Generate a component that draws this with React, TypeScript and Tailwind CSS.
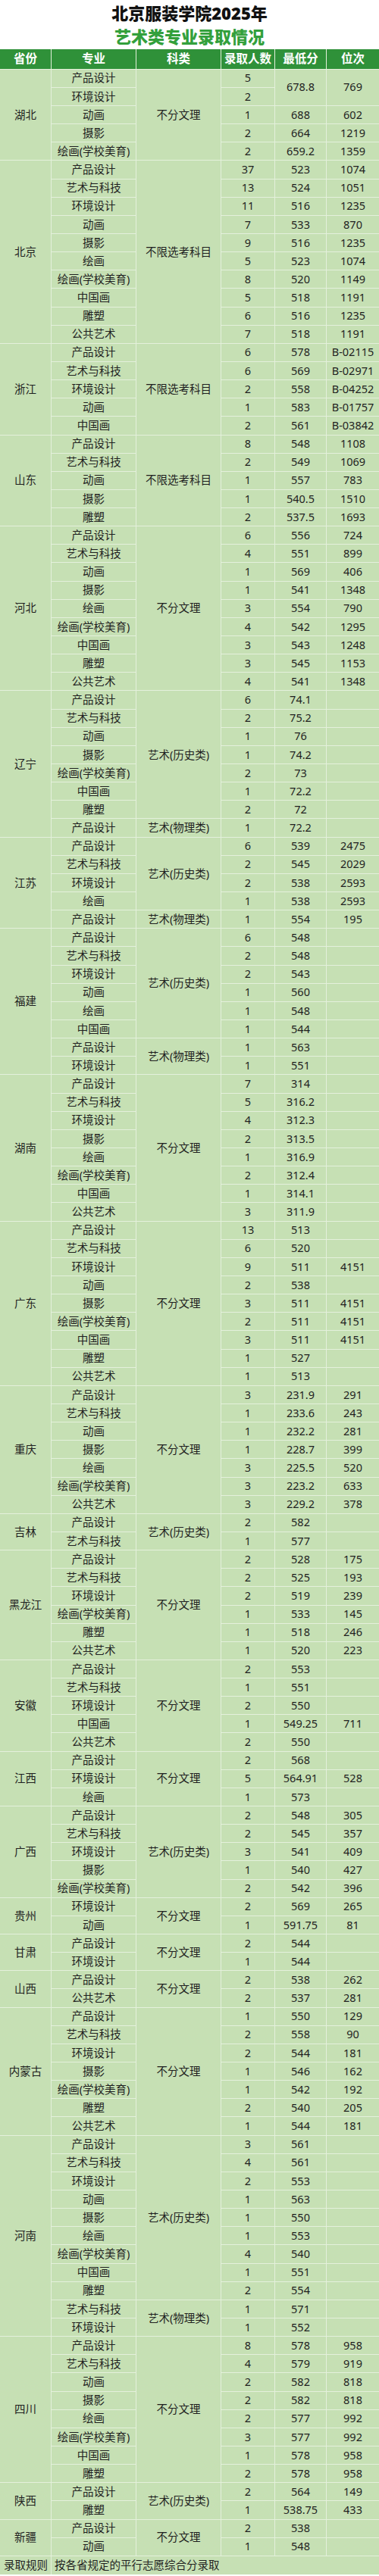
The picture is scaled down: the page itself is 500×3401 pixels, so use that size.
import React from "react";

// [专业, 录取人数, 最低分, 位次, 合并行数]; null = covered by the cell above
type Row = [string, string, string | null, string | null, number?];
type Group = { k: string; rows: Row[] };
type Province = { p: string; groups: Group[] };

const DATA: Province[] = [
  {
    p: "湖北",
    groups: [
      {
        k: "不分文理",
        rows: [
          ["产品设计", "5", "678.8", "769", 2],
          ["环境设计", "2", null, null],
          ["动画", "1", "688", "602"],
          ["摄影", "2", "664", "1219"],
          ["绘画(学校美育)", "2", "659.2", "1359"],
        ],
      },
    ],
  },
  {
    p: "北京",
    groups: [
      {
        k: "不限选考科目",
        rows: [
          ["产品设计", "37", "523", "1074"],
          ["艺术与科技", "13", "524", "1051"],
          ["环境设计", "11", "516", "1235"],
          ["动画", "7", "533", "870"],
          ["摄影", "9", "516", "1235"],
          ["绘画", "5", "523", "1074"],
          ["绘画(学校美育)", "8", "520", "1149"],
          ["中国画", "5", "518", "1191"],
          ["雕塑", "6", "516", "1235"],
          ["公共艺术", "7", "518", "1191"],
        ],
      },
    ],
  },
  {
    p: "浙江",
    groups: [
      {
        k: "不限选考科目",
        rows: [
          ["产品设计", "6", "578", "B-02115"],
          ["艺术与科技", "6", "569", "B-02971"],
          ["环境设计", "2", "558", "B-04252"],
          ["动画", "1", "583", "B-01757"],
          ["中国画", "2", "561", "B-03842"],
        ],
      },
    ],
  },
  {
    p: "山东",
    groups: [
      {
        k: "不限选考科目",
        rows: [
          ["产品设计", "8", "548", "1108"],
          ["艺术与科技", "2", "549", "1069"],
          ["动画", "1", "557", "783"],
          ["摄影", "1", "540.5", "1510"],
          ["雕塑", "2", "537.5", "1693"],
        ],
      },
    ],
  },
  {
    p: "河北",
    groups: [
      {
        k: "不分文理",
        rows: [
          ["产品设计", "6", "556", "724"],
          ["艺术与科技", "4", "551", "899"],
          ["动画", "1", "569", "406"],
          ["摄影", "1", "541", "1348"],
          ["绘画", "3", "554", "790"],
          ["绘画(学校美育)", "4", "542", "1295"],
          ["中国画", "3", "543", "1248"],
          ["雕塑", "3", "545", "1153"],
          ["公共艺术", "4", "541", "1348"],
        ],
      },
    ],
  },
  {
    p: "辽宁",
    groups: [
      {
        k: "艺术(历史类)",
        rows: [
          ["产品设计", "6", "74.1", ""],
          ["艺术与科技", "2", "75.2", ""],
          ["动画", "1", "76", ""],
          ["摄影", "1", "74.2", ""],
          ["绘画(学校美育)", "2", "73", ""],
          ["中国画", "1", "72.2", ""],
          ["雕塑", "2", "72", ""],
        ],
      },
      { k: "艺术(物理类)", rows: [["产品设计", "1", "72.2", ""]] },
    ],
  },
  {
    p: "江苏",
    groups: [
      {
        k: "艺术(历史类)",
        rows: [
          ["产品设计", "6", "539", "2475"],
          ["艺术与科技", "2", "545", "2029"],
          ["环境设计", "2", "538", "2593"],
          ["绘画", "1", "538", "2593"],
        ],
      },
      { k: "艺术(物理类)", rows: [["产品设计", "1", "554", "195"]] },
    ],
  },
  {
    p: "福建",
    groups: [
      {
        k: "艺术(历史类)",
        rows: [
          ["产品设计", "6", "548", ""],
          ["艺术与科技", "2", "548", ""],
          ["环境设计", "2", "543", ""],
          ["动画", "1", "560", ""],
          ["绘画", "1", "548", ""],
          ["中国画", "1", "544", ""],
        ],
      },
      {
        k: "艺术(物理类)",
        rows: [
          ["产品设计", "1", "563", ""],
          ["环境设计", "1", "551", ""],
        ],
      },
    ],
  },
  {
    p: "湖南",
    groups: [
      {
        k: "不分文理",
        rows: [
          ["产品设计", "7", "314", ""],
          ["艺术与科技", "5", "316.2", ""],
          ["环境设计", "4", "312.3", ""],
          ["摄影", "2", "313.5", ""],
          ["绘画", "1", "316.9", ""],
          ["绘画(学校美育)", "2", "312.4", ""],
          ["中国画", "1", "314.1", ""],
          ["公共艺术", "3", "311.9", ""],
        ],
      },
    ],
  },
  {
    p: "广东",
    groups: [
      {
        k: "不分文理",
        rows: [
          ["产品设计", "13", "513", ""],
          ["艺术与科技", "6", "520", ""],
          ["环境设计", "9", "511", "4151"],
          ["动画", "2", "538", ""],
          ["摄影", "3", "511", "4151"],
          ["绘画(学校美育)", "2", "511", "4151"],
          ["中国画", "3", "511", "4151"],
          ["雕塑", "1", "527", ""],
          ["公共艺术", "1", "513", ""],
        ],
      },
    ],
  },
  {
    p: "重庆",
    groups: [
      {
        k: "不分文理",
        rows: [
          ["产品设计", "3", "231.9", "291"],
          ["艺术与科技", "1", "233.6", "243"],
          ["动画", "1", "232.2", "281"],
          ["摄影", "1", "228.7", "399"],
          ["绘画", "3", "225.5", "520"],
          ["绘画(学校美育)", "3", "223.2", "633"],
          ["公共艺术", "3", "229.2", "378"],
        ],
      },
    ],
  },
  {
    p: "吉林",
    groups: [
      {
        k: "艺术(历史类)",
        rows: [
          ["产品设计", "2", "582", ""],
          ["艺术与科技", "1", "577", ""],
        ],
      },
    ],
  },
  {
    p: "黑龙江",
    groups: [
      {
        k: "不分文理",
        rows: [
          ["产品设计", "2", "528", "175"],
          ["艺术与科技", "2", "525", "193"],
          ["环境设计", "2", "519", "239"],
          ["绘画(学校美育)", "1", "533", "145"],
          ["雕塑", "1", "518", "246"],
          ["公共艺术", "1", "520", "223"],
        ],
      },
    ],
  },
  {
    p: "安徽",
    groups: [
      {
        k: "不分文理",
        rows: [
          ["产品设计", "2", "553", ""],
          ["艺术与科技", "1", "551", ""],
          ["环境设计", "2", "550", ""],
          ["中国画", "1", "549.25", "711"],
          ["公共艺术", "2", "550", ""],
        ],
      },
    ],
  },
  {
    p: "江西",
    groups: [
      {
        k: "不分文理",
        rows: [
          ["产品设计", "2", "568", ""],
          ["环境设计", "5", "564.91", "528"],
          ["绘画", "1", "573", ""],
        ],
      },
    ],
  },
  {
    p: "广西",
    groups: [
      {
        k: "艺术(历史类)",
        rows: [
          ["产品设计", "2", "548", "305"],
          ["艺术与科技", "2", "545", "357"],
          ["环境设计", "3", "541", "409"],
          ["摄影", "1", "540", "427"],
          ["绘画(学校美育)", "2", "542", "396"],
        ],
      },
    ],
  },
  {
    p: "贵州",
    groups: [
      {
        k: "不分文理",
        rows: [
          ["环境设计", "2", "569", "265"],
          ["动画", "1", "591.75", "81"],
        ],
      },
    ],
  },
  {
    p: "甘肃",
    groups: [
      {
        k: "不分文理",
        rows: [
          ["产品设计", "2", "544", ""],
          ["环境设计", "1", "544", ""],
        ],
      },
    ],
  },
  {
    p: "山西",
    groups: [
      {
        k: "不分文理",
        rows: [
          ["产品设计", "2", "538", "262"],
          ["公共艺术", "2", "537", "281"],
        ],
      },
    ],
  },
  {
    p: "内蒙古",
    groups: [
      {
        k: "不分文理",
        rows: [
          ["产品设计", "1", "550", "129"],
          ["艺术与科技", "2", "558", "90"],
          ["环境设计", "2", "544", "181"],
          ["摄影", "1", "546", "162"],
          ["绘画(学校美育)", "1", "542", "192"],
          ["雕塑", "2", "540", "205"],
          ["公共艺术", "1", "544", "181"],
        ],
      },
    ],
  },
  {
    p: "河南",
    groups: [
      {
        k: "艺术(历史类)",
        rows: [
          ["产品设计", "3", "561", ""],
          ["艺术与科技", "4", "561", ""],
          ["环境设计", "2", "553", ""],
          ["动画", "1", "563", ""],
          ["摄影", "1", "550", ""],
          ["绘画", "1", "553", ""],
          ["绘画(学校美育)", "4", "540", ""],
          ["中国画", "1", "551", ""],
          ["雕塑", "2", "554", ""],
        ],
      },
      {
        k: "艺术(物理类)",
        rows: [
          ["艺术与科技", "1", "571", ""],
          ["环境设计", "1", "552", ""],
        ],
      },
    ],
  },
  {
    p: "四川",
    groups: [
      {
        k: "不分文理",
        rows: [
          ["产品设计", "8", "578", "958"],
          ["艺术与科技", "4", "579", "919"],
          ["动画", "2", "582", "818"],
          ["摄影", "2", "582", "818"],
          ["绘画", "2", "577", "992"],
          ["绘画(学校美育)", "3", "577", "992"],
          ["中国画", "1", "578", "958"],
          ["雕塑", "2", "578", "958"],
        ],
      },
    ],
  },
  {
    p: "陕西",
    groups: [
      {
        k: "艺术(历史类)",
        rows: [
          ["产品设计", "2", "564", "149"],
          ["雕塑", "1", "538.75", "433"],
        ],
      },
    ],
  },
  {
    p: "新疆",
    groups: [
      {
        k: "不分文理",
        rows: [
          ["产品设计", "2", "538", ""],
          ["动画", "1", "548", ""],
        ],
      },
    ],
  },
];

const HEADERS = ["省份", "专业", "科类", "录取人数", "最低分", "位次"];

const cell = "flex items-center justify-center bg-[#c6e0b4] text-[14.5px] text-[#1f1f1f] whitespace-nowrap";

function span(n: number) {
  return n > 1 ? { gridRow: `span ${n}` } : undefined;
}

export default function App() {
  return (
    <div className="w-[500px] bg-white font-['Noto_Sans','Noto_Sans_CJK_SC',sans-serif]">
      {/* title */}
      <div className="flex h-[65px] flex-col items-center pt-[3px]">
        <h1 className="h-[28px] text-[22px] leading-[28px] font-black text-[#111]">北京服装学院2025年</h1>
        <h2 className="mt-[3px] h-[28px] text-[22px] leading-[28px] font-black text-[#33a03c]">
          艺术类专业录取情况
        </h2>
      </div>

      <div className="grid grid-cols-[67px_111px_111px_70px_67px_69px] grid-rows-[25.7px_repeat(136,23.156px)_24.1px] gap-px bg-[#e4f0dc]">
        {HEADERS.map((h) => (
          <div key={h} className="flex items-center justify-center bg-[#2f9139] text-[15.5px] font-bold text-white">
            {h}
          </div>
        ))}

        {DATA.map((prov) => {
          const total = prov.groups.reduce((a, g) => a + g.rows.length, 0);
          return prov.groups.map((g, gi) =>
            g.rows.map((r, ri) => {
              const [m, n, s, rank, merge] = r;
              const first = gi === 0 && ri === 0;
              return (
                <React.Fragment key={`${prov.p}-${gi}-${ri}`}>
                  {first && (
                    <div className={cell} style={span(total)}>
                      {prov.p}
                    </div>
                  )}
                  <div className={cell}>{m}</div>
                  {ri === 0 && (
                    <div className={cell} style={span(g.rows.length)}>
                      {g.k}
                    </div>
                  )}
                  <div className={cell}>{n}</div>
                  {s !== null && (
                    <div className={cell} style={span(merge ?? 1)}>
                      {s}
                    </div>
                  )}
                  {rank !== null && (
                    <div className={cell} style={span(merge ?? 1)}>
                      {rank}
                    </div>
                  )}
                </React.Fragment>
              );
            })
          );
        })}

        {/* footer */}
        <div className="flex items-center bg-[#c6e0b4] pl-[5px] text-[14.5px] text-[#1f1f1f] whitespace-nowrap">录取规则</div>
        <div className="col-span-5 flex items-center bg-[#c6e0b4] pl-[4px] text-[14.5px] text-[#1f1f1f]">
          按各省规定的平行志愿综合分录取
        </div>
      </div>
    </div>
  );
}
